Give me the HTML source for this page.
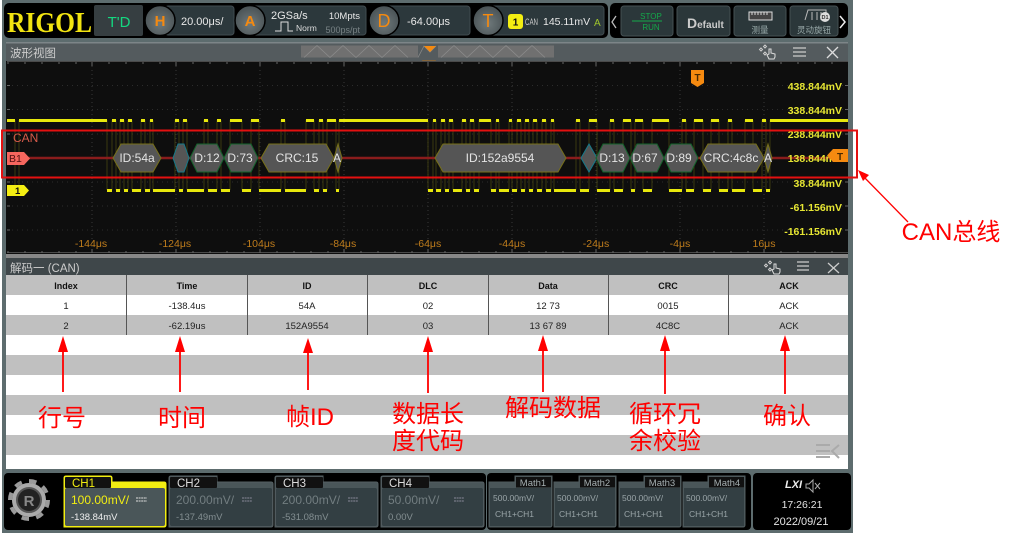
<!DOCTYPE html>
<html><head><meta charset="utf-8"><style>
html,body{margin:0;padding:0;background:#fff;width:1014px;height:533px;overflow:hidden}
svg{display:block;position:absolute;left:0;top:0}
text{font-family:"Liberation Sans","Noto Sans CJK SC",sans-serif}
.w{fill:#e8e8e8;font-size:11px}
.lab{fill:#e6e633;font-size:10.5px;font-weight:bold;text-anchor:end}
.t{fill:#c07d1c;font-size:10.5px;text-anchor:middle}
.th{fill:#111;font-size:9px;font-weight:bold;text-anchor:middle}
.td{fill:#222;font-size:9.5px;text-anchor:middle}
.dec{fill:#e4e4e4;font-size:12px;text-anchor:middle}
.ann{fill:#f00;font-size:24px;text-anchor:middle}
.ch{fill:#ddd;font-size:11.5px}
.m{fill:#9aa5a8;font-size:8.5px}
</style></head><body>
<svg width="1014" height="533" viewBox="0 0 1014 533">
<defs>
<radialGradient id="k" cx="50%" cy="60%" r="65%"><stop offset="0" stop-color="#6f797b"/><stop offset="1" stop-color="#444d50"/></radialGradient>
</defs>
<rect x="2" y="0" width="851" height="533" fill="#5d6c6e"/>
<!-- top bars -->
<rect x="4" y="3" width="604" height="35" rx="5" fill="#000"/>
<rect x="610" y="3" width="238" height="35" rx="5" fill="#000"/>
<text x="7" y="32" font-size="29" font-weight="bold" fill="#f2e411" style="font-family:'Liberation Serif',serif" textLength="85" lengthAdjust="spacingAndGlyphs">RIGOL</text>
<rect x="94" y="5" width="49" height="31" rx="2" fill="#363e41"/>
<text x="119" y="27" font-size="15" fill="#14d880" text-anchor="middle">T'D</text>
<rect x="165" y="6" width="69" height="29" rx="3" fill="#2c383c" stroke="#414c50"/>
<circle cx="160" cy="20.500" r="15" fill="url(#k)" stroke="#000" stroke-width="1.500"/>
<text x="160" y="26" font-size="15" font-weight="bold" fill="#f58a10" text-anchor="middle">H</text>
<text x="181" y="25" class="w">20.00μs/</text>
<rect x="245" y="6" width="121" height="29" rx="3" fill="#2c383c" stroke="#414c50"/>
<circle cx="250" cy="20.500" r="15" fill="url(#k)" stroke="#000" stroke-width="1.500"/>
<text x="250" y="26" font-size="15" font-weight="bold" fill="#f58a10" text-anchor="middle">A</text>
<text x="271" y="19" class="w" style="font-size:11px">2GSa/s</text>
<text x="360" y="19" class="w" text-anchor="end" style="font-size:9.500px">10Mpts</text>
<path d="M275 31H281V22H288V31H293" fill="none" stroke="#ddd"/>
<text x="296" y="31" fill="#ddd" font-size="8.500">Norm</text>
<text x="360" y="33" fill="#788285" font-size="9" text-anchor="end">500ps/pt</text>
<rect x="378" y="6" width="92" height="29" rx="3" fill="#2c383c" stroke="#414c50"/>
<circle cx="384" cy="20.500" r="15" fill="url(#k)" stroke="#000" stroke-width="1.500"/>
<text x="384" y="27" font-size="18" fill="#f58a10" text-anchor="middle">D</text>
<text x="407" y="25" class="w">-64.00μs</text>
<rect x="485" y="6" width="119" height="29" rx="3" fill="#2c383c" stroke="#414c50"/>
<circle cx="488" cy="20.500" r="15" fill="url(#k)" stroke="#000" stroke-width="1.500"/>
<text x="488" y="27" font-size="18" fill="#f58a10" text-anchor="middle">T</text>
<rect x="508" y="14" width="15" height="15" rx="3" fill="#f4ee12"/>
<text x="515.500" y="25.500" font-size="10" font-weight="bold" fill="#111" text-anchor="middle">1</text>
<text x="525" y="25" fill="#ccc" font-size="9" textLength="13" lengthAdjust="spacingAndGlyphs">CAN</text>
<text x="543" y="25" class="w" style="font-size:10.500px">145.11mV</text>
<text x="594" y="26" fill="#9fc52c" font-size="10">A</text>
<path d="M616 16L612 22L616 28" fill="none" stroke="#bbb" stroke-width="1.300"/>
<path d="M840 16L845 22L840 28" fill="none" stroke="#eee" stroke-width="1.500"/>
<g fill="#2b373a" stroke="#455053">
<rect x="621" y="6" width="52" height="30" rx="3"/>
<rect x="677" y="6" width="53" height="30" rx="3"/>
<rect x="734" y="6" width="52" height="30" rx="3"/>
<rect x="790" y="6" width="48" height="30" rx="3"/>
</g>
<text x="651" y="19" fill="#14a84a" font-size="8" text-anchor="middle">STOP</text>
<path d="M632 21H662" stroke="#14a84a"/>
<text x="651" y="30" fill="#14a84a" font-size="8" text-anchor="middle">RUN</text>
<text x="687" y="28" font-size="14" font-weight="bold" fill="#ccc">D<tspan font-size="10">efault</tspan></text>
<rect x="749" y="12" width="23" height="8" fill="#444" stroke="#ddd"/>
<path d="M752 12v3M755 12v3M758 12v3M761 12v3M764 12v3M767 12v3" stroke="#ddd"/>
<text x="760" y="33" font-size="8.500" fill="#9aa" text-anchor="middle">测量</text>
<path d="M805 20L808 10H826V20M812 20V12M817 20V12M821 20V12" fill="none" stroke="#bbb"/>
<circle cx="825" cy="17" r="5" fill="#ddd"/>
<text x="825" y="19" font-size="5.500" font-weight="bold" fill="#333" text-anchor="middle">D1</text>
<text x="814" y="33" font-size="8.500" fill="#9aa" text-anchor="middle">灵动旋钮</text>
<!-- wave panel -->
<rect x="6" y="42" width="842" height="19" fill="#545b5e"/>
<rect x="6" y="42" width="842" height="1.500" fill="#7d8588"/>
<text x="10" y="57" font-size="11.500" fill="#ccc">波形视图</text>
<rect x="301" y="45.500" width="117" height="12" fill="#707070"/><rect x="438" y="45.500" width="116" height="12" fill="#707070"/>
<path d="M304 57.500l13-12 13 12 13-12 13 12 13-12 13 12 13-12 13 12M441 57.500l13-12 13 12 13-12 13 12 13-12 13 12 13-12 13 12" fill="none" stroke="#8c8c8c" stroke-width=".8"/>
<path d="M418 57.500L424 46L430 52L436 46" fill="none" stroke="#888" stroke-width=".8"/>
<path d="M424 46H436L430 52Z" fill="#f58a10"/>
<path d="M423 61H435L429 69Z" fill="none" stroke="#b8721a"/>
<g fill="none" stroke="#ccc"><path d="M761 48l1.500 1.500-1.500 1.500-1.500-1.500zM765 45l1.500 1.500-1.500 1.500-1.500-1.500zM765 52l1.500 1.500-1.500 1.500-1.500-1.500z"/><path d="M769 59l-2-4 2-1v-5h2v4l4 1v3l-1 2z" stroke="#ddd" fill="#545b5e"/>
<path d="M793 48H806M793 52H806M793 56H806" stroke="#ccc" stroke-width="1.300"/><path d="M827 47L838 58M838 47L827 58" stroke="#ddd" stroke-width="1.300"/></g>
<rect x="6" y="61" width="842" height="193" fill="#0e0e0e"/>
<g stroke="#383838" stroke-dasharray="1 3" fill="none">
<path d="M92 62V252M176 62V252M260 62V252M344 62V252M428 62V252M512 62V252M596 62V252M680 62V252M764 62V252"/>
</g>
<g stroke="#2c2c2c" stroke-dasharray="1 4" fill="none">
<path d="M7 85.500H848M7 109.500H848M7 134H848M7 182H848M7 206H848M7 230H848"/>
</g>
<path d="M7 61.500H848M7 252.500H848" stroke="#4a4a4a"/>
<path d="M8 62v2M25 62v2M42 62v2M59 62v2M76 62v2M92 62v4M109 62v2M126 62v2M143 62v2M160 62v2M176 62v4M193 62v2M210 62v2M227 62v2M244 62v2M260 62v4M277 62v2M294 62v2M311 62v2M328 62v2M344 62v4M361 62v2M378 62v2M395 62v2M412 62v2M428 62v4M445 62v2M462 62v2M479 62v2M496 62v2M512 62v4M529 62v2M546 62v2M563 62v2M580 62v2M596 62v4M613 62v2M630 62v2M647 62v2M664 62v2M680 62v4M697 62v2M714 62v2M731 62v2M748 62v2M764 62v4M781 62v2M798 62v2M815 62v2M832 62v2
M8 253v-2M25 253v-2M42 253v-2M59 253v-2M76 253v-2M92 253v-4M109 253v-2M126 253v-2M143 253v-2M160 253v-2M176 253v-4M193 253v-2M210 253v-2M227 253v-2M244 253v-2M260 253v-4M277 253v-2M294 253v-2M311 253v-2M328 253v-2M344 253v-4M361 253v-2M378 253v-2M395 253v-2M412 253v-2M428 253v-4M445 253v-2M462 253v-2M479 253v-2M496 253v-2M512 253v-4M529 253v-2M546 253v-2M563 253v-2M580 253v-2M596 253v-4M613 253v-2M630 253v-2M647 253v-2M664 253v-2M680 253v-4M697 253v-2M714 253v-2M731 253v-2M748 253v-2M764 253v-4M781 253v-2M798 253v-2M815 253v-2M832 253v-2
M7 85.500h3M7 109.500h3M7 134h3M7 158h3M7 182h3M7 206h3M7 230h3M848 85.500h-3M848 109.500h-3M848 134h-3M848 182h-3M848 206h-3M848 230h-3" stroke="#666"/>
<!-- edges -->
<path d="M15 120V190M19 120V190M107 120V190M112 120V190M116 120V190M120 120V190M124 120V190M128 120V190M132 120V190M141 120V190M145 120V190M150 120V190M153 120V190M175 120V190M179 120V190M183 120V190M187 120V190M204 120V190M208 120V190M217 120V190M221 120V190M230 120V190M242 120V190M251 120V190M259 120V190M281 120V190M285 120V190M306 120V190M314 120V190M319 120V190M323 120V190M327 120V190M336 120V190M339 120V190M428 120V190M433 120V190M436 120V190M441 120V190M445 120V190M449 120V190M453 120V190M462 120V190M466 120V190M470 120V190M474 120V190M479 120V190M491 120V190M496 120V190M499 120V190M509 120V190M512 120V190M517 120V190M521 120V190M525 120V190M529 120V190M533 120V190M537 120V190M542 120V190M546 120V190M551 120V190M554 120V190M576 120V190M580 120V190M589 120V190M597 120V190M610 120V190M614 120V190M623 120V190M631 120V190M635 120V190M643 120V190M652 120V190M669 120V190M682 120V190M686 120V190M694 120V190M703 120V190M711 120V190M719 120V190M728 120V190M732 120V190M745 120V190M753 120V190M762 120V190M766 120V190M770 120V190" stroke="#4d4b12" stroke-width=".7"/>
<path d="M7 120.500H15M19 120.500H107M112 120.500H116M120 120.500H124M128 120.500H132M141 120.500H145M150 120.500H153M175 120.500H179M183 120.500H187M204 120.500H208M217 120.500H221M230 120.500H242M251 120.500H259M281 120.500H285M306 120.500H314M319 120.500H323M327 120.500H336M339 120.500H428M433 120.500H436M441 120.500H445M449 120.500H453M462 120.500H466M470 120.500H474M479 120.500H491M496 120.500H499M509 120.500H512M517 120.500H521M525 120.500H529M533 120.500H537M542 120.500H546M551 120.500H554M576 120.500H580M589 120.500H597M610 120.500H614M623 120.500H631M635 120.500H643M652 120.500H669M682 120.500H686M694 120.500H703M711 120.500H719M728 120.500H732M745 120.500H753M762 120.500H766M770 120.500H848
M107 190.500H112M116 190.500H120M124 190.500H128M132 190.500H141M145 190.500H150M153 190.500H175M179 190.500H183M187 190.500H204M208 190.500H217M221 190.500H230M242 190.500H251M259 190.500H281M285 190.500H306M314 190.500H319M323 190.500H327M336 190.500H339M428 190.500H433M436 190.500H441M445 190.500H449M453 190.500H462M466 190.500H470M474 190.500H479M491 190.500H496M499 190.500H509M512 190.500H517M521 190.500H525M529 190.500H533M537 190.500H542M546 190.500H551M554 190.500H576M580 190.500H589M597 190.500H610M614 190.500H623M631 190.500H635M643 190.500H652M669 190.500H682M686 190.500H694M703 190.500H711M719 190.500H728M732 190.500H745M753 190.500H762M766 190.500H770" stroke="#e8e80c" stroke-width="3"/>
<!-- bus -->
<rect x="6" y="131" width="842" height="46" fill="#0e0e0e" opacity="0"/>
<path d="M28 158H835" stroke="#8a1c1c" stroke-width="2.500"/>
<g stroke-width="1">
<g fill="#555" stroke="#77701a">
<path d="M113 158L121 144H153L161 158L153 172H121Z"/>
<path d="M261 158L269 144H326L334 158L326 172H269Z"/>
<path d="M334 158L338 144L342 158L338 172Z"/>
<path d="M435 158L443 144H558L566 158L558 172H443Z"/>
<path d="M700 158L708 144H756L764 158L756 172H708Z"/>
<path d="M764 158L768 144L772 158L768 172Z"/>
</g>
<g fill="#555" stroke="#167a8a">
<path d="M173 158L178 144H184L189 158L184 172H178Z"/>
<path d="M581 158L589 144L597 158L589 172Z"/>
</g>
<g fill="#555" stroke="#14642c">
<path d="M190 158L197 144H217L224 158L217 172H197Z"/>
<path d="M224 158L231 144H251L258 158L251 172H231Z"/>
<path d="M596 158L603 144H623L630 158L623 172H603Z"/>
<path d="M630 158L637 144H657L664 158L657 172H637Z"/>
<path d="M664 158L671 144H691L698 158L691 172H671Z"/>
</g>
</g>
<text x="137" y="162" class="dec">ID:54a</text><text x="207" y="162" class="dec">D:12</text><text x="240" y="162" class="dec">D:73</text><text x="297" y="162" class="dec">CRC:15</text><text x="337" y="162" class="dec">A</text>
<text x="500" y="162" class="dec">ID:152a9554</text><text x="612" y="162" class="dec">D:13</text><text x="645" y="162" class="dec">D:67</text><text x="679" y="162" class="dec">D:89</text><text x="731" y="162" class="dec">CRC:4c8c</text><text x="768" y="162" class="dec">A</text>
<text x="13" y="142" fill="#d65a4a" font-size="12">CAN</text>
<path d="M7 152H24L30 158.500L24 165H7Z" fill="#f5665e"/>
<text x="9" y="162" font-size="10.500" fill="#501010">B1</text>
<path d="M7 185H24L29 190.500L24 196H7Z" fill="#f4ee12"/>
<text x="15" y="194" font-size="9.500" font-weight="bold" fill="#111">1</text>
<path d="M691 70H704V83L697.500 87L691 83Z" fill="#f58a10"/><text x="697.500" y="81" font-size="10" font-weight="bold" fill="#4a2a00" text-anchor="middle">T</text>
<text x="842" y="90" class="lab">438.844mV</text><text x="842" y="114" class="lab">338.844mV</text><text x="842" y="138" class="lab">238.844mV</text><text x="842" y="162" class="lab">138.844mV</text><text x="842" y="187" class="lab">38.844mV</text><text x="842" y="211" class="lab">-61.156mV</text><text x="842" y="235" class="lab">-161.156mV</text>
<path d="M827 155.500L833 149H848V162H833Z" fill="#f58a10"/><text x="840" y="160" font-size="10" font-weight="bold" fill="#4a2a00" text-anchor="middle">T</text>
<text x="91" y="247" class="t">-144μs</text><text x="175" y="247" class="t">-124μs</text><text x="259" y="247" class="t">-104μs</text><text x="343" y="247" class="t">-84μs</text><text x="428" y="247" class="t">-64μs</text><text x="512" y="247" class="t">-44μs</text><text x="596" y="247" class="t">-24μs</text><text x="680" y="247" class="t">-4μs</text><text x="764" y="247" class="t">16μs</text>
<!-- decode table -->
<rect x="6" y="254" width="842" height="4" fill="#888"/>
<rect x="6" y="258" width="842" height="17" fill="#3f474a"/>
<text x="10" y="272" font-size="11.500" fill="#ccc">解码一 (CAN)</text>
<g fill="none" stroke="#ccc"><path d="M766 264l1.500 1.500-1.500 1.500-1.500-1.500zM770 261l1.500 1.500-1.500 1.500-1.500-1.500zM770 268l1.500 1.500-1.500 1.500-1.500-1.500z"/><path d="M774 274l-2-4 2-1v-5h2v4l4 1v3l-1 2z" stroke="#ddd" fill="#3f474a"/>
<path d="M797 262H809M797 266H809M797 270H809" stroke-width="1.300"/><path d="M828 263L839 273M839 263L828 273" stroke-width="1.300"/></g>
<rect x="6" y="275" width="842" height="194" fill="#fff"/>
<g fill="#c0c0c0">
<rect x="6" y="275" width="842" height="20"/><rect x="6" y="315" width="842" height="20"/><rect x="6" y="355" width="842" height="20"/><rect x="6" y="395" width="842" height="20"/><rect x="6" y="435" width="842" height="20"/>
</g>
<path d="M126.500 275V335M247.500 275V335M367.500 275V335M488.500 275V335M608.500 275V335M728.500 275V335" stroke="#555"/>
<text x="66" y="289" class="th">Index</text><text x="187" y="289" class="th">Time</text><text x="307" y="289" class="th">ID</text><text x="428" y="289" class="th">DLC</text><text x="548" y="289" class="th">Data</text><text x="668" y="289" class="th">CRC</text><text x="789" y="289" class="th">ACK</text>
<text x="66" y="309" class="td">1</text><text x="187" y="309" class="td">-138.4us</text><text x="307" y="309" class="td">54A</text><text x="428" y="309" class="td">02</text><text x="548" y="309" class="td">12 73</text><text x="668" y="309" class="td">0015</text><text x="789" y="309" class="td">ACK</text>
<text x="66" y="329" class="td">2</text><text x="187" y="329" class="td">-62.19us</text><text x="307" y="329" class="td">152A9554</text><text x="428" y="329" class="td">03</text><text x="548" y="329" class="td">13 67 89</text><text x="668" y="329" class="td">4C8C</text><text x="789" y="329" class="td">ACK</text>
<path d="M816 445H830M816 451H830M816 457H830" stroke="#aaa" stroke-width="2"/><path d="M839 445L832 451L839 458" fill="none" stroke="#aaa" stroke-width="2"/>
<!-- bottom -->
<rect x="4" y="473" width="482" height="57" rx="4" fill="#000"/>
<rect x="487" y="473" width="264" height="57" rx="4" fill="#000"/>
<rect x="753" y="473" width="98" height="57" rx="4" fill="#000"/>
<circle cx="29" cy="500" r="19" fill="none" stroke="#9a9a9a" stroke-width="4" stroke-dasharray="7.500 7.400"/>
<circle cx="29" cy="500" r="15" fill="#555" stroke="#aaa" stroke-width="4"/>
<circle cx="29" cy="500" r="11" fill="#222"/>
<text x="29" y="506" font-size="15" font-weight="bold" fill="#888" text-anchor="middle">R</text>
<!-- CH -->
<path d="M64 527V478Q64 476 66 476H110Q112 476 112 478V482H164Q166 482 166 484V525Q166 527 164 527Z" fill="#f2ee12" stroke="#f2ee12"/>
<rect x="65" y="477" width="46" height="11" rx="1" fill="#111"/>
<rect x="65" y="488" width="100" height="38" rx="2" fill="#4a5659"/>
<text x="72" y="487" font-size="11.500" fill="#f2ee12">CH1</text>
<text x="71" y="504" font-size="12" fill="#f2ee12">100.00mV/</text>
<path d="M136 498H147M136 501H147" stroke="#ddd" stroke-dasharray="2 .6"/>
<text x="71" y="520" fill="#eee" font-size="9.500">-138.84mV</text>
<path d="M169 527V478Q169 476 171 476H217V482H271Q273 482 273 484V525Q273 527 271 527Z" fill="#4a5659" stroke="#555f62"/>
<rect x="170" y="477" width="47" height="11" rx="1" fill="#111"/>
<rect x="170" y="488" width="102" height="38" rx="2" fill="#333f43"/>
<text x="177" y="487" class="ch">CH2</text><text x="176" y="504" font-size="12" fill="#727d80">200.00mV/</text>
<path d="M242 498H252M242 501H252" stroke="#889" stroke-dasharray="2 .6"/>
<text x="176" y="520" fill="#838e91" font-size="9.500">-137.49mV</text>
<path d="M275 527V478Q275 476 277 476H323V482H376Q378 482 378 484V525Q378 527 376 527Z" fill="#4a5659" stroke="#555f62"/>
<rect x="276" y="477" width="47" height="11" rx="1" fill="#111"/>
<rect x="276" y="488" width="101" height="38" rx="2" fill="#333f43"/>
<text x="283" y="487" class="ch">CH3</text><text x="282" y="504" font-size="12" fill="#727d80">200.00mV/</text>
<path d="M348 498H358M348 501H358" stroke="#889" stroke-dasharray="2 .6"/>
<text x="282" y="520" fill="#838e91" font-size="9.500">-531.08mV</text>
<path d="M381 527V478Q381 476 383 476H429V482H482Q484 482 484 484V525Q484 527 482 527Z" fill="#4a5659" stroke="#555f62"/>
<rect x="382" y="477" width="47" height="11" rx="1" fill="#111"/>
<rect x="382" y="488" width="101" height="38" rx="2" fill="#333f43"/>
<text x="389" y="487" class="ch">CH4</text><text x="388" y="504" font-size="12" fill="#727d80">50.00mV/</text>
<path d="M454 498H464M454 501H464" stroke="#889" stroke-dasharray="2 .6"/>
<text x="388" y="520" fill="#838e91" font-size="9.500">0.00V</text>
<!-- math -->
<g fill="#4a5659" stroke="#4f5a5d">
<path d="M489 527V482H515V476H552V525Q552 527 550 527Z"/>
<path d="M554 527V482H579V476H616V525Q616 527 614 527Z"/>
<path d="M619 527V482H644V476H681V525Q681 527 679 527Z"/>
<path d="M683 527V482H708V476H745V525Q745 527 743 527Z"/>
</g>
<g fill="#333f43"><rect x="490" y="488" width="61" height="38"/><rect x="555" y="488" width="60" height="38"/><rect x="620" y="488" width="60" height="38"/><rect x="684" y="488" width="60" height="38"/></g>
<g fill="#111"><rect x="516" y="477" width="35" height="10.500"/><rect x="580" y="477" width="35" height="10.500"/><rect x="645" y="477" width="35" height="10.500"/><rect x="709" y="477" width="35" height="10.500"/></g>
<g font-size="9.500" fill="#a5afb1" text-anchor="middle"><text x="533" y="486">Math1</text><text x="597" y="486">Math2</text><text x="662" y="486">Math3</text><text x="727" y="486">Math4</text></g>
<text x="493" y="501" class="m">500.00mV/</text><text x="495" y="517" class="m">CH1+CH1</text>
<text x="557" y="501" class="m">500.00mV/</text><text x="559" y="517" class="m">CH1+CH1</text>
<text x="622" y="501" class="m">500.00mV/</text><text x="624" y="517" class="m">CH1+CH1</text>
<text x="686" y="501" class="m">500.00mV/</text><text x="689" y="517" class="m">CH1+CH1</text>
<text x="785" y="488" font-size="11" font-weight="bold" font-style="italic" fill="#eee">LXI</text>
<path d="M806 484h3l4-4v12l-4-4h-3zM815 483l5 6M820 483l-5 6" fill="none" stroke="#aaa"/>
<text x="802" y="508" font-size="10.500" fill="#e4e4e4" text-anchor="middle">17:26:21</text>
<text x="801" y="525" font-size="11" fill="#e4e4e4" text-anchor="middle">2022/09/21</text>
<!-- annotations -->
<rect x="2" y="130.500" width="855" height="47" fill="none" stroke="#e41010" stroke-width="2"/>
<path d="M908 222L862 175" stroke="#f00" stroke-width="1.300"/><path d="M858 170L869 175L863 181Z" fill="#f00"/>
<text x="951" y="240" style="font-size:24px;fill:#f00;text-anchor:middle">CAN总线</text>
<g stroke="#f00" stroke-width="1.800">
<path d="M63 350V392M180 350V392M308 350V390M428 350V393M543 350V392M665 350V394M785 350V394"/>
</g>
<g fill="#f00">
<path d="M58 352L63 336L68 352Z"/><path d="M175 352L180 336L185 352Z"/><path d="M303 353L308 338L313 353Z"/><path d="M423 352L428 336L433 352Z"/><path d="M538 351L543 335L548 351Z"/><path d="M660 351L665 335L670 351Z"/><path d="M780 351L785 335L790 351Z"/>
</g>
<text x="62" y="426" class="ann">行号</text><text x="182" y="426" class="ann">时间</text><text x="310" y="425" class="ann">帧ID</text>
<text x="428" y="422" class="ann">数据长</text><text x="428" y="449" class="ann">度代码</text>
<text x="553" y="416" class="ann">解码数据</text>
<text x="665" y="422" class="ann">循环冗</text><text x="665" y="449" class="ann">余校验</text>
<text x="787" y="424" class="ann">确认</text>
</svg>
</body></html>
